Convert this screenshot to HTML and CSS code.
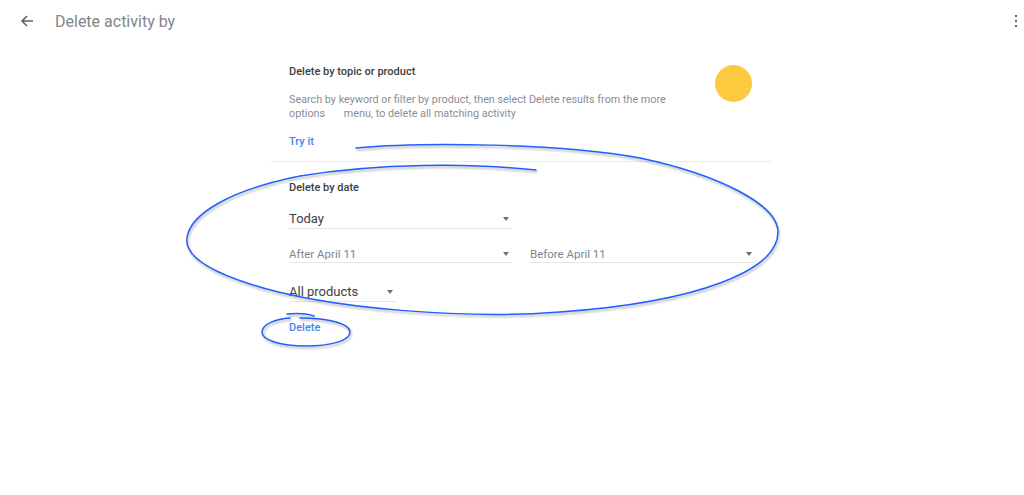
FILE: index.html
```html
<!DOCTYPE html>
<html lang="en">
<head>
  <meta charset="UTF-8" />
  <meta name="viewport" content="width=device-width, initial-scale=1.0" />
  <title>Delete activity by</title>
  <link rel="stylesheet" href="styles.css">
</head>
<body>
  <header class="topbar">
    <button class="back" aria-label="Back">
      <svg width="16" height="16" viewBox="0 0 16 16"><path d="M14 8H3.5M8 3L3 8l5 5" fill="none" stroke="#5f6368" stroke-width="1.6"/></svg>
    </button>
    <h1 class="title">Delete activity by</h1>
    <button class="more" aria-label="More options">
      <svg width="4" height="14" viewBox="0 0 4 14"><rect x="1" y="1" width="2" height="2" fill="#5f6368"/><rect x="1" y="6" width="2" height="2" fill="#5f6368"/><rect x="1" y="11" width="2" height="2" fill="#5f6368"/></svg>
    </button>
  </header>

  <main class="panel">
    <section class="topic">
      <div class="topic-text">
        <h2 class="label">Delete by topic or product</h2>
        <p class="desc">Search by keyword or filter by product, then select Delete results from the more options&nbsp;&nbsp;&nbsp;&nbsp;&nbsp;&nbsp; menu, to delete all matching activity</p>
        <a class="link try">Try it</a>
      </div>
      <div class="sun"></div>
    </section>

    <section class="bydate">
      <h2 class="label">Delete by date</h2>
      <div class="select big wide">Today<span class="caret"></span></div>
      <div class="range">
        <div class="select small wide">After April 11<span class="caret"></span></div>
        <div class="select small wide">Before April 11<span class="caret"></span></div>
      </div>
      <div class="select big narrow">All products<span class="caret"></span></div>
      <a class="link del">Delete</a>
    </section>
  </main>

  <svg class="marks" width="1024" height="495" viewBox="0 0 1024 495">
    <path d="M356 148 C420 142 560 143 640 158 C720 175 778 205 778 232 C778 270 700 302 560 312 C470 319 330 310 250 284 C200 268 185 252 187 238 C190 214 230 190 300 176 C380 163 470 163 536 170"/>
    <path d="M287 314 C298 313 308 314 314 316"/>
    <path d="M300 318 C330 318 350 324 350 332 C350 341 330 346 306 346 C280 346 262 340 262 332 C262 324 276 319 290 318"/>
  </svg>
</body>
</html>
```

FILE: styles.css
```css
body {
  margin: 0;
  font-family: Roboto, "Liberation Sans", Arial, sans-serif;
  background: #fff;
  color: #3c4043;
}
.topbar {
  display: flex;
  align-items: center;
  height: 42px;
}
.back, .more {
  border: none;
  background: none;
  padding: 0;
  display: flex;
  cursor: pointer;
}
.back {
  margin-left: 19px;
}
.title {
  margin: 1px 0 0 20px;
  font-size: 16px;
  font-weight: 400;
  color: #80868b;
  flex: 1;
}
.more {
  margin-right: 6px;
}
.panel {
  width: 501px;
  margin-left: 271px;
}
.topic {
  display: flex;
  justify-content: space-between;
  align-items: flex-start;
  padding: 23px 20px 12px 18px;
  border-bottom: 1px solid #ebebeb;
}
.topic-text {
  width: 385px;
}
.label {
  margin: 0;
  font-size: 11px;
  line-height: 14px;
  font-weight: 500;
  color: #3c4043;
}
.desc {
  margin: 14px 0 0;
  font-size: 10.8px;
  line-height: 14px;
  color: #8a8e93;
}
.link {
  display: block;
  font-size: 11px;
  line-height: 14px;
  font-weight: 500;
  color: #4285f4;
  cursor: pointer;
}
.try {
  margin-top: 14px;
}
.sun {
  width: 37px;
  height: 37px;
  border-radius: 50%;
  background: #fdc93f;
}
.bydate {
  padding: 19px 0 0 18px;
}
.select {
  position: relative;
  border-bottom: 1px solid #e6e6e6;
  box-sizing: border-box;
}
.big {
  margin-top: 15px;
  font-size: 13px;
  line-height: 18px;
  color: #3c4043;
}
.small {
  font-size: 11.5px;
  line-height: 16px;
  color: #80868b;
}
.wide {
  width: 223px;
}
.narrow {
  width: 107px;
  margin-top: 20px;
}
.range {
  display: flex;
  gap: 18px;
  margin-top: 17px;
}
.range .wide:last-child {
  width: 225px;
}
.caret {
  position: absolute;
  right: 3px;
  top: 50%;
  margin-top: -2px;
  border-left: 3.5px solid transparent;
  border-right: 3.5px solid transparent;
  border-top: 4px solid #6f6f6f;
}
.del {
  margin-top: 19px;
}
.marks {
  position: absolute;
  left: 0;
  top: 0;
  pointer-events: none;
}
.marks path {
  fill: none;
  stroke: #1f5eff;
  stroke-width: 1.5;
  stroke-linecap: round;
  filter: drop-shadow(1px 2px 1px rgba(0, 0, 0, 0.3));
}
```
